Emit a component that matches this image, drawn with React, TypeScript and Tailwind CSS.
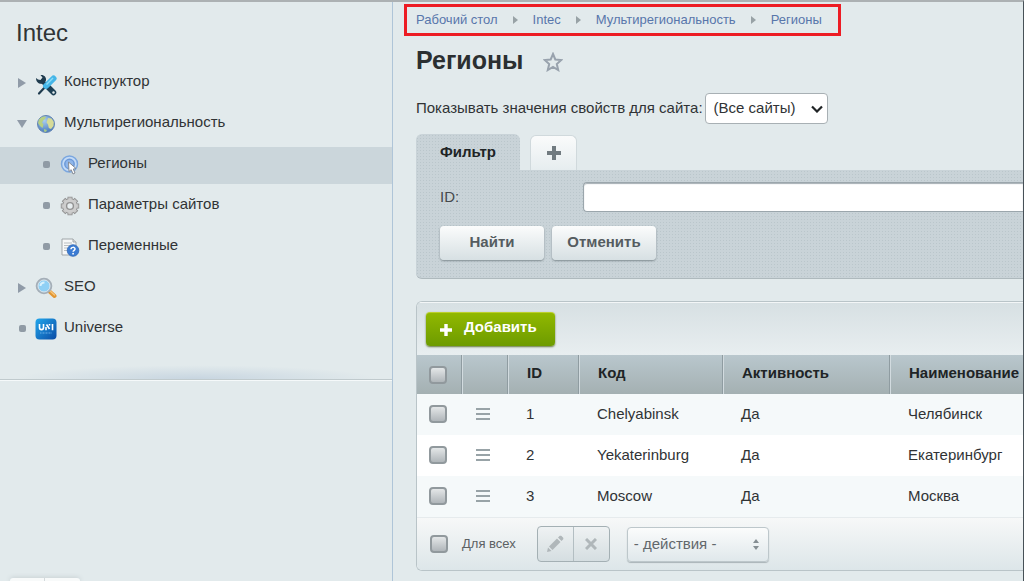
import type { ReactNode } from "react";

interface MenuItem {
  label: string;
  icon: ReactNode;
  marker: "closed" | "open" | "dot";
  nested?: boolean;
  active?: boolean;
}

function ToolsIcon() {
  return (
    <svg viewBox="0 0 22 22" className="mt-1 h-[22px] w-[22px]">
      <path d="M13 13L18.500 18.500" stroke="#1d4055" strokeWidth="5.500" strokeLinecap="round" />
      <path d="M6 6L13 13" stroke="#1f3b4e" strokeWidth="4" />
      <path
        d="M1 4C1 8.500 4.500 10.500 8 9.500L11 6.500C11.500 3 9 .5 5.500 1L7.500 3.500L5.500 6L3 5.500Z"
        fill="#1f3b4e"
      />
      <path d="M4 19.500L11 12" stroke="#1f3b4e" strokeWidth="2.200" strokeLinecap="round" />
      <path d="M11 12L18.500 4.500" stroke="#45b6e8" strokeWidth="6" strokeLinecap="round" />
      <path d="M11.500 10.500L18 4" stroke="#8bdcf8" strokeWidth="1.500" />
      <circle cx="18.500" cy="18.500" r="1.200" fill="#e2eaec" />
    </svg>
  );
}

function GlobeIcon() {
  return (
    <svg viewBox="0 0 20 20" className="h-5 w-5">
      <defs>
        <radialGradient id="globe" cx="40%" cy="30%" r="70%">
          <stop offset="0" stopColor="#a9cdf1" />
          <stop offset="1" stopColor="#4c7cbb" />
        </radialGradient>
      </defs>
      <circle cx="10" cy="10" r="8.500" fill="url(#globe)" stroke="#6385b4" />
      <path d="M3 5.500C5 3 7 2 10 2.500L9 5L7.500 6L6 8.500L7.500 10.500L6.500 14L4 12L2 9Z" fill="#b8d083" />
      <path d="M12 4L15.500 4.500L17.800 8L17.500 12L15 15L12.800 14L12 10.500L10.500 8.500Z" fill="#d6db98" />
      <path d="M8 15L11 16L10 18L8 17.500Z" fill="#a9c989" />
    </svg>
  );
}

function RegionsIcon() {
  return (
    <svg viewBox="0 0 20 20" className="h-5 w-5">
      <circle cx="9.500" cy="9" r="8" fill="#c4dbf6" stroke="#7ba7df" strokeWidth="1.500" />
      <circle cx="9.500" cy="9" r="4.700" fill="#8fb6ea" stroke="#6c99d8" strokeWidth="1.500" />
      <path
        d="M8.500 7L9 16.500L11.200 14.700L13 19L15 18L13.300 14L16 13.500Z"
        fill="#fff"
        stroke="#858b94"
        strokeWidth="1"
        strokeLinejoin="round"
      />
    </svg>
  );
}

function GearIcon() {
  return (
    <svg viewBox="0 0 20 20" className="h-5 w-5">
      <g stroke="#8f8f8f" strokeWidth="5">
        <path d="M10 .8V19.200M.8 10H19.200M3.500 3.500L16.500 16.500M16.500 3.500L3.500 16.500" />
      </g>
      <circle cx="10" cy="10" r="7.800" fill="#8f8f8f" />
      <g stroke="#c6c6c6" strokeWidth="3.400">
        <path d="M10 1.600V18.400M1.600 10H18.400M4.100 4.100L15.900 15.900M15.900 4.100L4.100 15.900" />
      </g>
      <circle cx="10" cy="10" r="7" fill="#cdcdcd" />
      <circle cx="10" cy="10" r="3.400" fill="#e7edef" stroke="#929292" strokeWidth="1.400" />
    </svg>
  );
}

function VariablesIcon() {
  return (
    <svg viewBox="0 0 20 20" className="h-5 w-5">
      <path d="M2 2H13L16 5V18H2Z" fill="#f7f8f8" stroke="#a0a6a9" />
      <path d="M13 2V5H16" fill="#ddd" stroke="#a0a6a9" />
      <path d="M4 6H12M4 8.500H12M4 11H9M4 13.500H8" stroke="#b9bec1" />
      <circle cx="13" cy="13.500" r="5.800" fill="#3a7bd3" stroke="#2c66b6" strokeWidth=".8" />
      <path
        d="M11 12.200C11 9.800 15 9.800 15 12C15 13.300 13.100 13.300 13.100 14.800"
        fill="none"
        stroke="#fff"
        strokeWidth="1.500"
      />
      <circle cx="13.100" cy="16.700" r=".9" fill="#fff" />
    </svg>
  );
}

function SearchIcon() {
  return (
    <svg viewBox="0 0 22 22" className="h-[22px] w-[22px]">
      <path d="M14 14L19.500 19" stroke="#e29632" strokeWidth="4" strokeLinecap="round" />
      <path d="M14.500 13.500L19.500 18" stroke="#f7c478" strokeWidth="1.500" strokeLinecap="round" />
      <circle cx="9" cy="9" r="7.200" fill="#8fd0f5" stroke="#a5afb8" strokeWidth="2.200" />
      <circle cx="9" cy="9" r="6" fill="none" stroke="#dae8f1" />
      <path d="M5.500 9C5.500 6.500 7 5.500 9.500 5.500" fill="none" stroke="#d8f1fd" strokeWidth="2" />
    </svg>
  );
}

function UniverseIcon() {
  return (
    <svg viewBox="0 0 22 22" className="h-[22px] w-[22px]">
      <defs>
        <linearGradient id="universe" x1="0" y1="0" x2="1" y2="1">
          <stop offset="0" stopColor="#21a7ec" />
          <stop offset="1" stopColor="#0b4ba5" />
        </linearGradient>
      </defs>
      <rect x=".5" y=".5" width="21" height="21" rx="4" fill="url(#universe)" />
      <path
        d="M4.500 6V9.500C4.500 12.300 8.500 12.300 8.500 9.500V6M11 12.200V9M11.500 6.500L14.500 11M14.500 6V7.500M17.500 6V12.200"
        fill="none"
        stroke="#fff"
        strokeWidth="1.600"
      />
      <path d="M5 15H17" stroke="#6aaee8" strokeDasharray="1 .5" />
    </svg>
  );
}

const menu: MenuItem[] = [
  { label: "Конструктор", icon: <ToolsIcon />, marker: "closed" },
  { label: "Мультирегиональность", icon: <GlobeIcon />, marker: "open" },
  { label: "Регионы", icon: <RegionsIcon />, marker: "dot", nested: true, active: true },
  { label: "Параметры сайтов", icon: <GearIcon />, marker: "dot", nested: true },
  { label: "Переменные", icon: <VariablesIcon />, marker: "dot", nested: true },
  { label: "SEO", icon: <SearchIcon />, marker: "closed" },
  { label: "Universe", icon: <UniverseIcon />, marker: "dot" },
];

const crumbs = ["Рабочий стол", "Intec", "Мультирегиональность", "Регионы"];

const regions = [
  { id: 1, code: "Chelyabinsk", active: "Да", name: "Челябинск" },
  { id: 2, code: "Yekaterinburg", active: "Да", name: "Екатеринбург" },
  { id: 3, code: "Moscow", active: "Да", name: "Москва" },
];

function Marker({ type }: { type: MenuItem["marker"] }) {
  if (type === "dot") {
    return <span className="h-[7px] w-[7px] rounded-xs bg-[#909ba5]" />;
  }
  return (
    <svg viewBox="0 0 10 10" className="h-2.5 w-2.5 fill-[#909ba8]">
      <path d={type === "open" ? "M0 1H10L5 9Z" : "M1 0L9 5L1 10Z"} />
    </svg>
  );
}

function Sidebar() {
  return (
    <aside className="flex w-[393px] shrink-0 flex-col border-r border-[#afc5d8]">
      <h2 className="px-4 pt-[15px] text-2xl leading-8 text-[#303436]">Intec</h2>
      <nav className="flex flex-col gap-1 pt-4">
        {menu.map((item) => (
          <a
            key={item.label}
            href="#"
            className={`flex h-[37px] items-center pb-0.5 text-[15px] text-[#303335] ${
              item.nested ? "pl-10" : "pl-4"
            } ${item.active ? "bg-[#cbd6db]" : ""}`}
          >
            <span className="flex w-3 justify-center">
              <Marker type={item.marker} />
            </span>
            <span className="mx-1.5 flex w-6 justify-center">{item.icon}</span>
            <span className="pb-0.5">{item.label}</span>
          </a>
        ))}
      </nav>
      <div className="mt-4 h-4 border-b border-[#c0cacd] bg-[radial-gradient(ellipse_at_bottom,#c7d5e0_0%,#e2eaec00_65%)] shadow-[0_1px_0_#f5f9fa]" />
      <div className="mt-auto ml-2.5 flex h-[3px] w-[70px] rounded-t-full bg-[#f8fafa] shadow-[0_0_5px_#b9c2c5]">
        <span className="w-1/2 border-r border-[#d4dadc]" />
      </div>
    </aside>
  );
}

function Checkbox({ label }: { label: string }) {
  return (
    <input
      type="checkbox"
      aria-label={label}
      className="block h-[18px] w-[18px] appearance-none rounded-[4px] border-2 border-[#91999d] bg-linear-to-b from-[#e4e7e8] to-[#b0b6ba]"
    />
  );
}

function PlusIcon({ className }: { className: string }) {
  return (
    <svg viewBox="0 0 14 14" className={className}>
      <path d="M7 0V14M0 7H14" stroke="currentColor" strokeWidth="4" />
    </svg>
  );
}

function Breadcrumbs() {
  return (
    <nav className="ml-[11px] flex h-8 w-fit items-center border-[3px] border-[#ed1c24] pr-4 pl-[9px] text-[13px] text-[#5876ab]">
      {crumbs.map((crumb, i) => (
        <span key={crumb} className="flex items-center">
          {i > 0 && (
            <svg viewBox="0 0 5 8" className="mx-[15px] h-2 w-[5px] fill-[#98a2a6]">
              <path d="M0 0L5 4L0 8Z" />
            </svg>
          )}
          <a href="#">{crumb}</a>
        </span>
      ))}
    </nav>
  );
}

const filterButton =
  "h-[34px] w-[104px] rounded-[4px] bg-linear-to-b from-[#fbfcfc] to-[#d7e0e3] pb-0.5 text-[15px] font-bold text-[#555c60] shadow-[0_1px_2px_#7f8b90]";

const dotted =
  "bg-[#c9d3d8] bg-[radial-gradient(circle,#bac6cb_1px,transparent_1px)] bg-size-[3px_3px]";

function Filter() {
  return (
    <section className="pt-2.5">
      <div className="flex items-end gap-2.5">
        <button className={`h-9 w-[104px] rounded-t-md text-[15px] font-bold text-[#202426] ${dotted}`}>
          Фильтр
        </button>
        <button
          aria-label="Добавить фильтр"
          className="flex h-[35px] w-[47px] items-center justify-center rounded-t-md border border-b-0 border-[#d0d9dc] bg-linear-to-b from-[#fafbfb] to-[#e6edef] text-[#717b80]"
        >
          <PlusIcon className="h-3.5 w-3.5" />
        </button>
      </div>
      <div className={`rounded-bl-md border-b border-[#aeb9bd] pt-3 pb-[18px] pl-6 ${dotted}`}>
        <div className="flex items-center">
          <label htmlFor="filter-id" className="w-[143px] text-[15px] text-[#45494c]">
            ID:
          </label>
          <input
            id="filter-id"
            type="text"
            className="h-[30px] min-w-0 flex-1 rounded-l-[4px] border border-r-0 border-[#9ba6ac] bg-white px-2 shadow-[inset_0_1px_1px_#a6afb4]"
          />
        </div>
        <div className="mt-3.5 flex gap-2">
          <button className={filterButton}>Найти</button>
          <button className={filterButton}>Отменить</button>
        </div>
      </div>
    </section>
  );
}

const headCell =
  "border-r border-[#8f9ca1] p-0 pb-0.5 pl-[19px] text-left font-bold text-[#202426] shadow-[inset_1px_0_0_#d2dbdf]";

function RegionsTable() {
  return (
    <section className="mt-[22px] overflow-hidden rounded-l-md border border-r-0 border-[#b9c4c8] bg-[#f5f9fa]">
      <div className="border-t border-[#f3f6f7] bg-linear-to-b from-[#d7e0e3] to-[#e8eef0] py-[9px] pl-[9px]">
        <button className="flex h-[34px] w-[129px] items-center rounded-[4px] border-t border-[#bdd02b] bg-linear-to-b from-[#91b800] to-[#6d9b00] pl-3.5 text-[15px] font-bold text-white shadow-[0_1px_2px_#65783c]">
          <PlusIcon className="mr-3 h-3 w-3" />
          <span className="pb-1">Добавить</span>
        </button>
      </div>
      <table className="w-full table-fixed border-separate border-spacing-0 text-[15px] text-[#303335]">
        <colgroup>
          <col className="w-[45px]" />
          <col className="w-[46px]" />
          <col className="w-[71px]" />
          <col className="w-[144px]" />
          <col className="w-[167px]" />
          <col />
        </colgroup>
        <thead className="bg-linear-to-b from-[#b9c7cd] to-[#a4b0b2]">
          <tr className="h-[39px]">
            <th className="border-r border-[#8f9ca1] p-0 pl-3">
              <Checkbox label="Выбрать все" />
            </th>
            <th className={headCell} />
            <th className={headCell}>ID</th>
            <th className={headCell}>Код</th>
            <th className={headCell}>Активность</th>
            <th className="p-0 pb-0.5 pl-[19px] text-left font-bold text-[#202426] shadow-[inset_1px_0_0_#d2dbdf]">
              Наименование
            </th>
          </tr>
        </thead>
        <tbody>
          {regions.map((region) => (
            <tr key={region.id} className="h-[41px] even:bg-white">
              <td className="p-0 pb-0.5 pl-3">
                <Checkbox label={region.name} />
              </td>
              <td className="p-0 pb-0.5 pl-3.5">
                <button aria-label="Меню" className="block">
                  <svg viewBox="0 0 14 12" className="h-3 w-3.5">
                    <path d="M0 1H14M0 6H14M0 11H14" stroke="#98a3a7" strokeWidth="2" />
                  </svg>
                </button>
              </td>
              <td className="p-0 pl-[18px]">{region.id}</td>
              <td className="p-0 pl-[18px]">{region.code}</td>
              <td className="p-0 pl-[18px]">{region.active}</td>
              <td className="p-0 pl-[18px]">{region.name}</td>
            </tr>
          ))}
        </tbody>
      </table>
      <div className="flex h-[53px] items-center border-t border-[#e6ebed] bg-linear-to-b from-[#f7f8f8] to-[#dde6e9] pl-[13px]">
        <label className="flex items-center gap-3.5 text-[13px] text-[#5b6164]">
          <Checkbox label="Для всех" />
          Для всех
        </label>
        <div className="ml-[21px] flex h-9 w-[73px] rounded-[4px] border border-[#a4b0b4] bg-linear-to-b from-[#eff2f3] to-[#d5dee1]">
          <button aria-label="Изменить" className="flex flex-1 items-center justify-center border-r border-[#b3bec2]">
            <svg viewBox="0 0 18 18" className="h-[18px] w-[18px] fill-[#b0b7ba]">
              <path d="M1 17L2 12.500L5.500 16Z M3 11.500L11 3.500L14.500 7L6.500 15Z M12 2.500L13.500 1C14 .5 15 .5 15.500 1L17 2.500C17.500 3 17.500 4 17 4.500L15.500 6Z" />
            </svg>
          </button>
          <button aria-label="Удалить" className="flex flex-1 items-center justify-center">
            <svg viewBox="0 0 12 12" className="h-3 w-3">
              <path d="M1 1L11 11M11 1L1 11" stroke="#b0b7ba" strokeWidth="3" />
            </svg>
          </button>
        </div>
        <div className="relative ml-[17px]">
          <select
            aria-label="Действия"
            className="block h-[35px] w-[142px] appearance-none rounded-[4px] border border-[#bdc7cb] bg-linear-to-b from-[#fbfcfc] to-[#e0e8eb] pl-1.5 text-[15px] text-[#62686c] shadow-[0_1px_1px_#a9b3b7]"
          >
            <option>- действия -</option>
          </select>
          <svg
            viewBox="0 0 6 11"
            className="pointer-events-none absolute top-3 right-2.5 h-[11px] w-1.5 fill-[#858e93]"
          >
            <path d="M0 4L3 0L6 4Z M0 7H6L3 11Z" />
          </svg>
        </div>
      </div>
    </section>
  );
}

export default function App() {
  return (
    <div className="flex min-h-screen overflow-hidden border-t-2 border-r border-t-[#acb1b3] border-r-[#475157] bg-[#e2eaec] font-['Liberation_Sans',Arial,sans-serif]">
      <Sidebar />
      <main className="min-w-0 flex-1 pt-0.5">
        <Breadcrumbs />
        <div className="pl-[23px]">
          <div className="flex items-center gap-5 pt-2">
            <h1 className="text-[25px] leading-8 font-bold text-[#2b2f31]">Регионы</h1>
            <svg viewBox="0 0 20 20" className="mt-1 h-5 w-5">
              <path
                d="M10 2L12.300 7.500L18.300 8L13.800 12L15.200 18L10 14.800L4.800 18L6.200 12L1.700 8L7.700 7.500Z"
                fill="none"
                stroke="#98a2ad"
                strokeWidth="2"
              />
            </svg>
          </div>
          <div className="flex items-center gap-0.5 pt-[17px]">
            <label htmlFor="site" className="text-[15px] text-[#303335]">
              Показывать значения свойств для сайта:
            </label>
            <div className="relative">
              <select
                id="site"
                className="block h-[31px] w-[123px] appearance-none rounded-[4px] border border-[#a8b0b4] bg-white pl-2 text-[15px] text-[#303335]"
              >
                <option>(Все сайты)</option>
              </select>
              <svg viewBox="0 0 12 8" className="pointer-events-none absolute top-3 right-[5px] h-2 w-3">
                <path d="M1 1.500L6 6.500L11 1.500" fill="none" stroke="#202426" strokeWidth="2.200" />
              </svg>
            </div>
          </div>
          <Filter />
          <RegionsTable />
        </div>
      </main>
    </div>
  );
}
